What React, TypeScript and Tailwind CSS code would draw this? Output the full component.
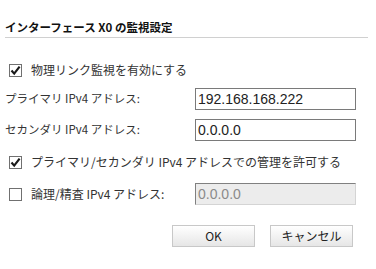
const jp = "font-['Noto_Sans_CJK_JP','Noto_Sans',sans-serif]"

function Check({ checked }: { checked: boolean }) {
  return (
    <span className="flex h-[13px] w-[13px] shrink-0 items-center justify-center border border-[#707070] bg-white">
      {checked && (
        <svg width="11" height="11" viewBox="0 0 11 11">
          <path d="M1.5 5.5 L4.2 8.6 L9.6 1.6" fill="none" stroke="#1a1a1a" strokeWidth="2.2" />
        </svg>
      )}
    </span>
  )
}

function Field({ value, disabled }: { value: string; disabled?: boolean }) {
  return (
    <div
      className={
        "flex h-[22px] w-[161px] items-center px-[2px] font-['Liberation_Sans',Arial,sans-serif] text-[14px] " +
        (disabled
          ? "border border-t-[#808080] border-l-[#808080] border-r-[#d4d4d4] border-b-[#d4d4d4] bg-[#ececec] text-[#8a8a8a]"
          : "border border-[#7a7a7a] bg-white text-[#222]")
      }
    >
      {value}
    </div>
  )
}

function Btn({ label }: { label: string }) {
  return (
    <button className="flex h-[22px] w-[83px] items-center justify-center border border-[#c8c8c8] bg-gradient-to-b from-white to-[#e6e6e6] text-[12px] text-[#222]">
      {label}
    </button>
  )
}

export default function App() {
  return (
    <div className={`h-[269px] w-[376px] bg-white px-[5px] pt-[20px] text-[12px] text-[#333] ${jp}`}>
      <div className="flex h-[18px] w-[363px] items-start border-b border-[#d0d0d0] text-[11.5px] font-bold leading-[15px] text-[#111]">
        インターフェース X0 の監視設定
      </div>

      <div className="mt-[23px] flex h-[18px] items-center gap-[9px] pl-[4px]">
        <Check checked />
        <span>物理リンク監視を有効にする</span>
      </div>

      <div className="mt-[9px] flex h-[22px] items-center">
        <span className="w-[190px] text-[11.5px]">プライマリ IPv4 アドレス:</span>
        <Field value="192.168.168.222" />
      </div>

      <div className="mt-[9px] flex h-[22px] items-center">
        <span className="w-[190px] text-[11.5px]">セカンダリ IPv4 アドレス:</span>
        <Field value="0.0.0.0" />
      </div>

      <div className="mt-[12px] flex h-[18px] items-center gap-[9px] pl-[4px]">
        <Check checked />
        <span>プライマリ/セカンダリ IPv4 アドレスでの管理を許可する</span>
      </div>

      <div className="mt-[12px] flex h-[22px] items-center">
        <div className="flex w-[190px] items-center gap-[9px] pl-[4px]">
          <Check checked={false} />
          <span>論理/精査 IPv4 アドレス:</span>
        </div>
        <Field value="0.0.0.0" disabled />
      </div>

      <div className="mt-[20px] flex gap-[15px] pl-[167px]">
        <Btn label="OK" />
        <Btn label="キャンセル" />
      </div>
    </div>
  )
}
